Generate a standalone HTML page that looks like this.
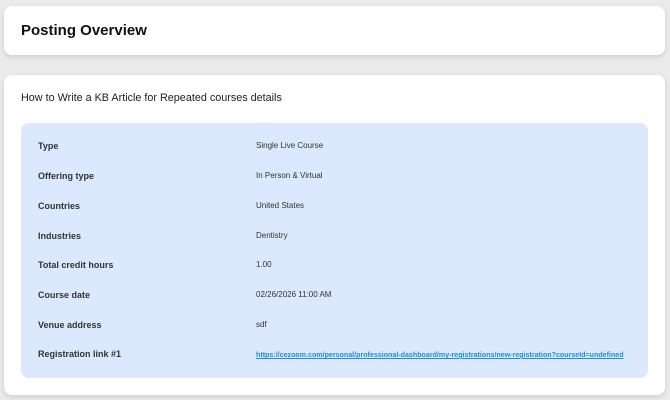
<!DOCTYPE html>
<html><head><style>
body{margin:0;width:670px;height:400px;background:#ebebeb;font-family:"Liberation Sans",sans-serif;position:relative;overflow:hidden}
.c1{position:absolute;left:4px;top:6px;width:661px;height:49px;background:#fff;border-radius:8px;box-shadow:0 2px 6px rgba(0,0,0,.12)}
.c1 h1{position:absolute;left:17px;top:16px;margin:0;font-size:15px;font-weight:bold;color:#111}
.c2{position:absolute;left:4px;top:75px;width:661px;height:320px;background:#fff;border-radius:8px;box-shadow:0 2px 6px rgba(0,0,0,.12)}
.sub{position:absolute;left:17px;top:17px;font-size:10.8px;color:#222}
.blue{position:absolute;left:17px;top:48px;width:627px;height:255px;background:#dbe8fd;border-radius:8px}
.r{position:absolute;left:17px;font-size:9px;color:#333;font-weight:bold}
.v{position:absolute;left:235px;font-size:8px;color:#333}
a{color:#1a8ee0;text-decoration:underline;font-weight:bold;font-size:7.1px}
</style></head><body>
<div class="c1"><h1>Posting Overview</h1></div>
<div class="c2"><div class="sub">How to Write a KB Article for Repeated courses details</div>
<div class="blue">
<div class="r" style="top:18px">Type</div><div class="v" style="top:18px">Single Live Course</div>
<div class="r" style="top:48px">Offering type</div><div class="v" style="top:48px">In Person &amp; Virtual</div>
<div class="r" style="top:78px">Countries</div><div class="v" style="top:78px">United States</div>
<div class="r" style="top:108px">Industries</div><div class="v" style="top:108px">Dentistry</div>
<div class="r" style="top:137px">Total credit hours</div><div class="v" style="top:137px">1.00</div>
<div class="r" style="top:167px">Course date</div><div class="v" style="top:167px">02/26/2026 11:00 AM</div>
<div class="r" style="top:197px">Venue address</div><div class="v" style="top:197px">sdf</div>
<div class="r" style="top:226px">Registration link #1</div><div class="v" style="top:227px"><a>https://cezoom.com/personal/professional-dashboard/my-registrations/new-registration?courseId=undefined</a></div>
</div></div>
</body></html>
